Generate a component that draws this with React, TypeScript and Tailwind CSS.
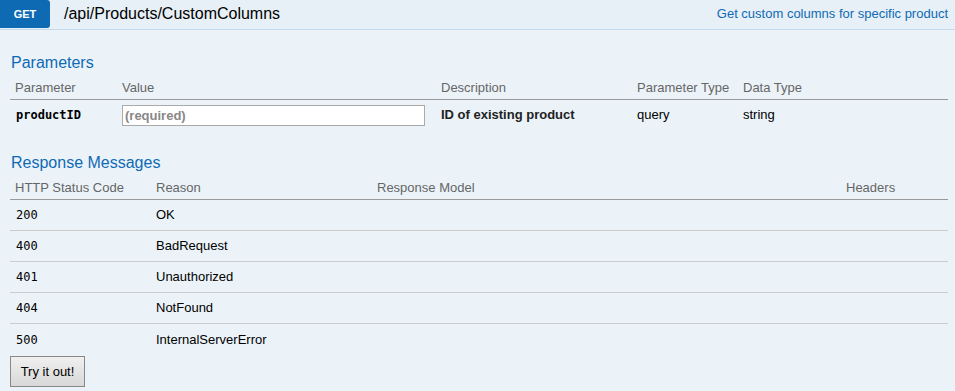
import React from "react";

const SANS = "font-['Liberation_Sans',Arial,sans-serif]";
const MONO = "font-['DejaVu_Sans_Mono',Consolas,monospace]";

const RESPONSES = [
  { code: "200", reason: "OK" },
  { code: "400", reason: "BadRequest" },
  { code: "401", reason: "Unauthorized" },
  { code: "404", reason: "NotFound" },
  { code: "500", reason: "InternalServerError" },
];

const PARAM_COLS = "grid grid-cols-[107px_319px_196px_106px_1fr]";
const RESP_COLS = "grid grid-cols-[141px_221px_469px_1fr]";

const App: React.FC = () => {
  return (
    <div className={`w-[955px] h-[391px] bg-[#ebf3f9] overflow-hidden ${SANS}`}>
      {/* Heading bar */}
      <div className="h-[30px] bg-[#e7f0f7] border-b border-[#c3d9ec] flex items-start">
        <span className="w-[50px] h-[28px] bg-[#0f6ab4] rounded-r-[3px] text-white text-[11px] font-bold flex items-center justify-center">
          GET
        </span>
        <span className="ml-[14px] h-[28px] flex items-center text-[16px] text-black">/api/Products/CustomColumns</span>
        <span className="ml-auto mr-[7px] h-[28px] flex items-center text-[13px] text-[#0f6ab4]">
          Get custom columns for specific product
        </span>
      </div>

      <div className="pl-[10px] pr-[7px]">
        {/* Parameters */}
        <h4 className="mt-[24px] pl-[1px] text-[16px] leading-[18px] text-[#0f6ab4]">Parameters</h4>
        <div className={`${PARAM_COLS} mt-[5px] h-[23px] items-center border-b border-[#999] text-[13px] text-[#666]`}>
          <span className="px-[5px]">Parameter</span>
          <span className="px-[5px]">Value</span>
          <span className="px-[5px]">Description</span>
          <span className="px-[5px]">Parameter Type</span>
          <span className="px-[5px]">Data Type</span>
        </div>
        <div className={`${PARAM_COLS} h-[30px] items-center text-[13px] text-black`}>
          <span className={`px-[6px] text-[12px] font-bold ${MONO}`}>productID</span>
          <span className="px-[5px]">
            <input
              readOnly
              placeholder="(required)"
              className="w-[303px] h-[21px] bg-white border border-[#aaa] px-[2px] text-[13px] font-bold placeholder:text-[#888] outline-none"
            />
          </span>
          <span className="px-[5px] font-bold text-[#222]">ID of existing product</span>
          <span className="px-[5px]">query</span>
          <span className="px-[5px]">string</span>
        </div>

        {/* Response Messages */}
        <h4 className="mt-[24px] pl-[1px] text-[16px] leading-[18px] text-[#0f6ab4]">Response Messages</h4>
        <div className={`${RESP_COLS} mt-[5px] h-[23px] items-center border-b border-[#999] text-[13px] text-[#666]`}>
          <span className="px-[5px]">HTTP Status Code</span>
          <span className="px-[5px]">Reason</span>
          <span className="px-[5px]">Response Model</span>
          <span className="px-[5px]">Headers</span>
        </div>
        {RESPONSES.map((r, i) => (
          <div
            key={r.code}
            className={`${RESP_COLS} h-[31px] items-center text-[13px] text-black ${
              i < RESPONSES.length - 1 ? "border-b border-[#ccc]" : ""
            }`}
          >
            <span className={`px-[6px] text-[12px] ${MONO}`}>{r.code}</span>
            <span className="px-[5px]">{r.reason}</span>
            <span className="px-[5px]" />
            <span className="px-[5px]" />
          </div>
        ))}

        <button className="mt-[1px] w-[75px] h-[31px] border border-[#888] bg-gradient-to-b from-[#f0f0f0] to-[#d8d8d8] text-[13px] text-black">
          Try it out!
        </button>
      </div>
    </div>
  );
};

export default App;
